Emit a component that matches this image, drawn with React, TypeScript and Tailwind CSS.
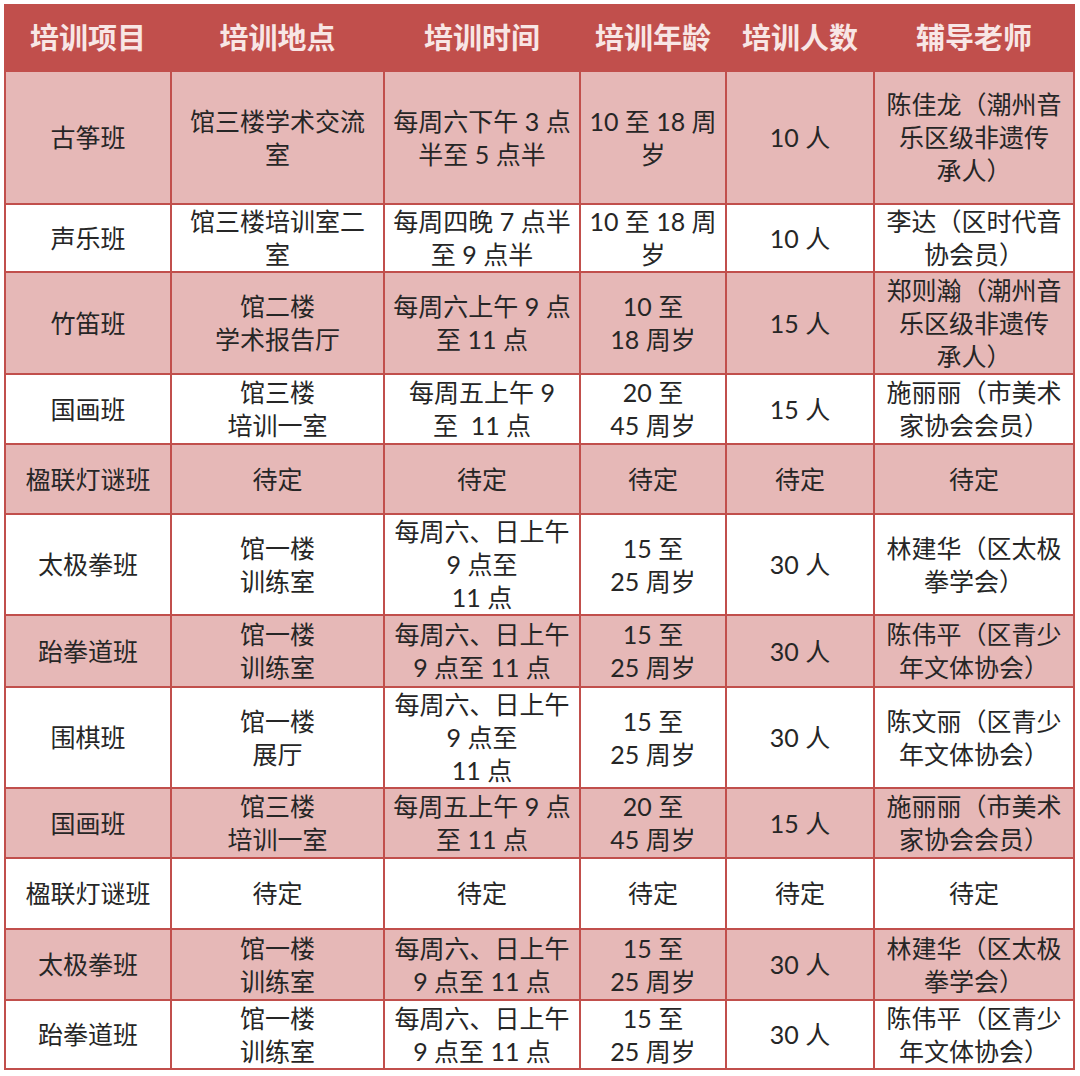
const headers = ["培训项目", "培训地点", "培训时间", "培训年龄", "培训人数", "辅导老师"];

type Row = { cells: string[][]; pink: boolean };

const rows: Row[] = [
  { pink: true, cells: [["古筝班"], ["馆三楼学术交流", "室"], ["每周六下午 3 点", "半至 5 点半"], ["10 至 18 周", "岁"], ["10 人"], ["陈佳龙（潮州音", "乐区级非遗传", "承人）"]] },
  { pink: false, cells: [["声乐班"], ["馆三楼培训室二", "室"], ["每周四晚 7 点半", "至 9 点半"], ["10 至 18 周", "岁"], ["10 人"], ["李达（区时代音", "协会员）"]] },
  { pink: true, cells: [["竹笛班"], ["馆二楼", "学术报告厅"], ["每周六上午 9 点", "至 11 点"], ["10 至", "18 周岁"], ["15 人"], ["郑则瀚（潮州音", "乐区级非遗传", "承人）"]] },
  { pink: false, cells: [["国画班"], ["馆三楼", "培训一室"], ["每周五上午 9", "至  11 点"], ["20 至", "45 周岁"], ["15 人"], ["施丽丽（市美术", "家协会会员）"]] },
  { pink: true, cells: [["楹联灯谜班"], ["待定"], ["待定"], ["待定"], ["待定"], ["待定"]] },
  { pink: false, cells: [["太极拳班"], ["馆一楼", "训练室"], ["每周六、日上午", "9 点至", "11 点"], ["15 至", "25 周岁"], ["30 人"], ["林建华（区太极", "拳学会）"]] },
  { pink: true, cells: [["跆拳道班"], ["馆一楼", "训练室"], ["每周六、日上午", "9 点至 11 点"], ["15 至", "25 周岁"], ["30 人"], ["陈伟平（区青少", "年文体协会）"]] },
  { pink: false, cells: [["围棋班"], ["馆一楼", "展厅"], ["每周六、日上午", "9 点至", "11 点"], ["15 至", "25 周岁"], ["30 人"], ["陈文丽（区青少", "年文体协会）"]] },
  { pink: true, cells: [["国画班"], ["馆三楼", "培训一室"], ["每周五上午 9 点", "至 11 点"], ["20 至", "45 周岁"], ["15 人"], ["施丽丽（市美术", "家协会会员）"]] },
  { pink: false, cells: [["楹联灯谜班"], ["待定"], ["待定"], ["待定"], ["待定"], ["待定"]] },
  { pink: true, cells: [["太极拳班"], ["馆一楼", "训练室"], ["每周六、日上午", "9 点至 11 点"], ["15 至", "25 周岁"], ["30 人"], ["林建华（区太极", "拳学会）"]] },
  { pink: false, cells: [["跆拳道班"], ["馆一楼", "训练室"], ["每周六、日上午", "9 点至 11 点"], ["15 至", "25 周岁"], ["30 人"], ["陈伟平（区青少", "年文体协会）"]] },
];

export default function App() {
  return (
    <div className="min-h-screen bg-white pt-[4px] pl-[4px] font-['Lato','Noto_Sans_CJK_SC',sans-serif]">
      <div className="grid w-[1071px] grid-cols-[164px_211px_194px_144px_146px_198px] grid-rows-[64px_131px_66px_100px_68px_68px_99px_70px_99px_68px_69px_69px_67px] gap-[2px] bg-[#c14f4c] p-[2px]">
        {headers.map((h) => (
          <div key={h} className="flex items-center justify-center bg-[#c14f4c] text-[29px] font-bold text-[#f8e6e5]">
            {h}
          </div>
        ))}
        {rows.map((row, ri) =>
          row.cells.map((lines, ci) => (
            <div
              key={`${ri}-${ci}`}
              className={`flex flex-col items-center justify-center whitespace-pre text-[25px] leading-[33px] text-[#262626] ${row.pink ? "bg-[#e6b8b7]" : "bg-white"}`}
            >
              {lines.map((l, li) => (
                <span key={li}>{l}</span>
              ))}
            </div>
          ))
        )}
      </div>
    </div>
  );
}
